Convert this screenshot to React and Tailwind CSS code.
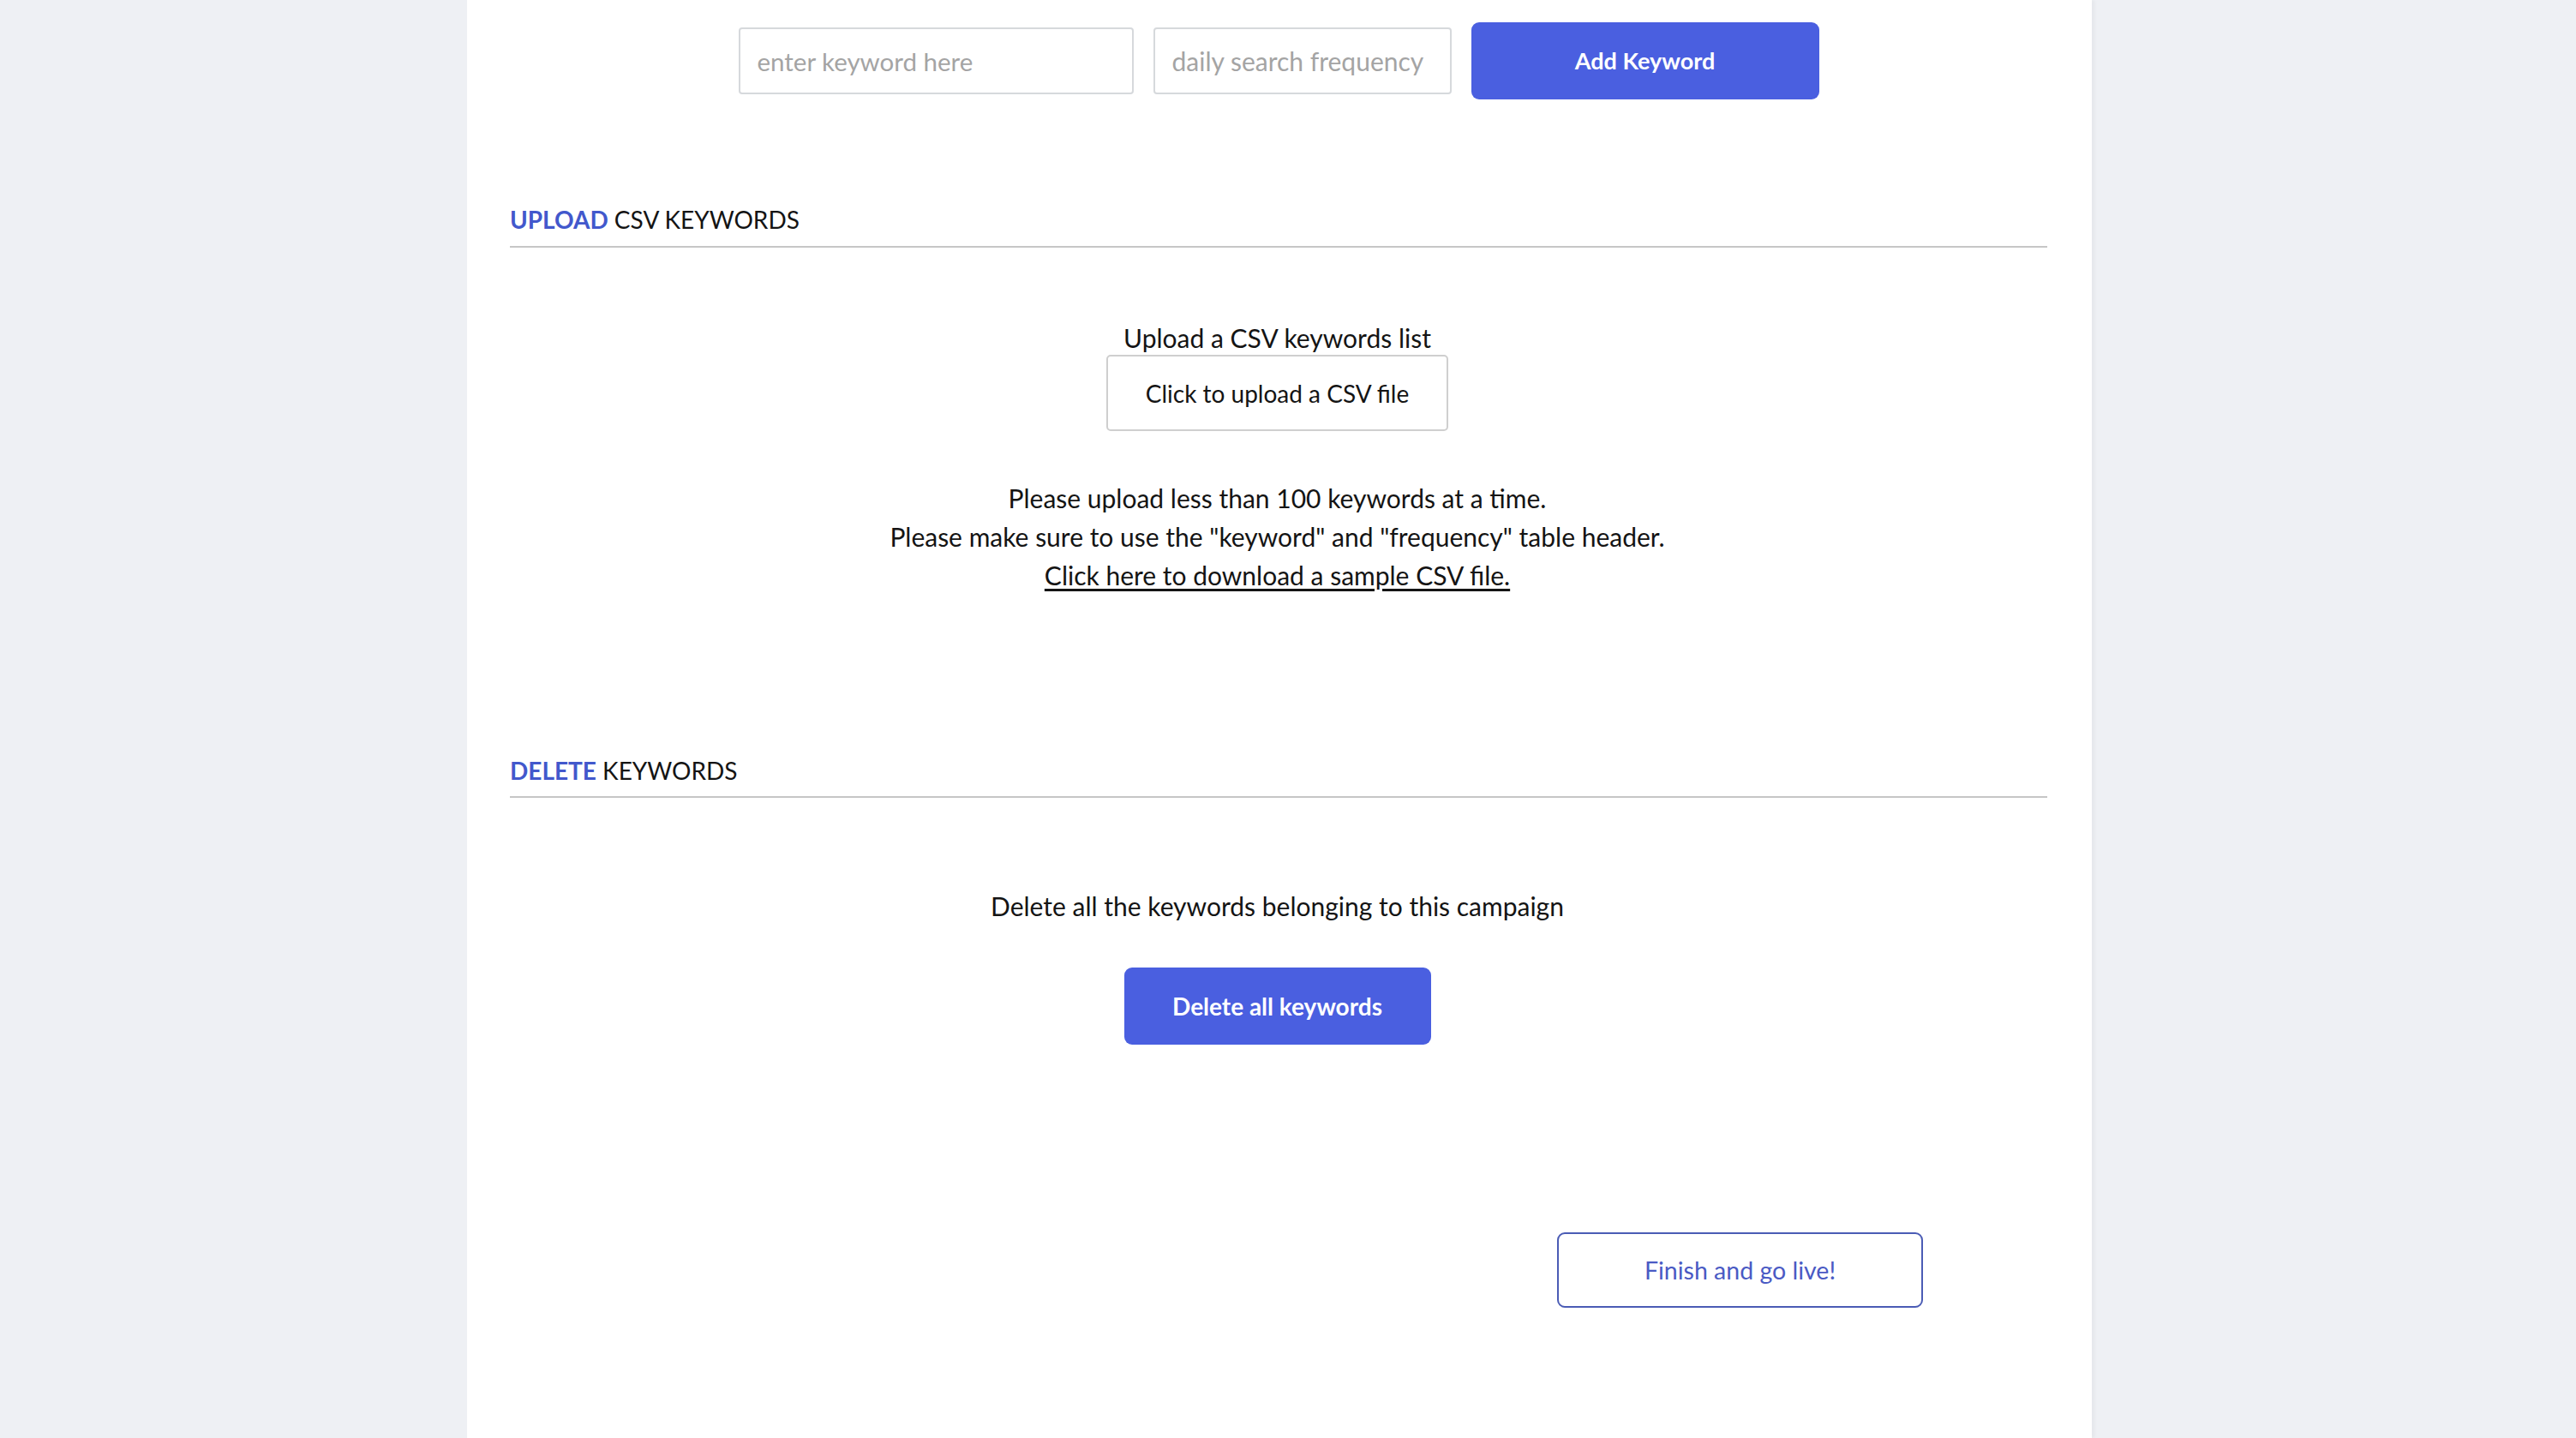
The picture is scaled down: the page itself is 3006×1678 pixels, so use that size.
export default function App() {
  return (
    <div className="min-h-screen bg-[#eef0f4] font-['Lato',sans-serif] text-[#141414]">
      <div className="ml-[545px] min-h-[1678px] w-[1896px] bg-white pl-[50px] pr-[52px] pt-[26px] shadow-[4px_0_3px_rgba(0,0,0,0.03)]">
        {/* add keyword row */}
        <div className="flex items-center justify-center gap-[23px]">
          <input
            className="h-[78px] w-[461px] rounded-[4px] border-2 border-[#d6d9dc] px-[20px] text-[29.5px] outline-none placeholder:text-[#a4a4a4]"
            placeholder="enter keyword here"
          />
          <input
            className="h-[78px] w-[348px] rounded-[4px] border-2 border-[#d6d9dc] px-[20px] text-[30px] outline-none placeholder:text-[#a4a4a4]"
            placeholder="daily search frequency"
          />
          <button className="h-[90px] w-[406px] rounded-[9px] bg-[#4a5fe0] text-[27px] font-bold text-white">
            Add Keyword
          </button>
        </div>

        {/* upload */}
        <h2 className="mt-[123px] border-b-2 border-[#c6c6c6] pb-[14px] text-[28px] leading-[34px]">
          <span className="font-bold text-[#4258cc]">UPLOAD</span> CSV KEYWORDS
        </h2>
        <div className="mt-[88px] flex flex-col items-center pr-[3px]">
          <p className="text-[30px] leading-[34px]">Upload a CSV keywords list</p>
          <button className="mt-[3px] h-[89px] w-[399px] rounded-[5px] border-2 border-[#cfcfcf] text-[28px]">
            Click to upload a CSV file
          </button>
          <div className="mt-[56px] text-center text-[30px] leading-[45px]">
            <p>Please upload less than 100 keywords at a time.</p>
            <p>Please make sure to use the "keyword" and "frequency" table header.</p>
            <a href="#" className="underline underline-offset-4">
              Click here to download a sample CSV file.
            </a>
          </div>
        </div>

        {/* delete */}
        <h2 className="mt-[188px] border-b-2 border-[#c6c6c6] pb-[13px] text-[28px] leading-[34px]">
          <span className="font-bold text-[#4258cc]">DELETE</span> KEYWORDS
        </h2>
        <div className="mt-[109px] flex flex-col items-center pr-[3px]">
          <p className="text-[30px] leading-[34px]">
            Delete all the keywords belonging to this campaign
          </p>
          <button className="mt-[55px] h-[90px] w-[358px] rounded-[9px] bg-[#4a5fe0] text-[28px] font-bold text-white">
            Delete all keywords
          </button>
        </div>

        <div className="mt-[219px] flex justify-end pr-[145px]">
          <button className="h-[88px] w-[427px] rounded-[9px] border-2 border-[#4b5cb5] text-[28.5px] text-[#4a5ac4]">
            Finish and go live!
          </button>
        </div>
      </div>
    </div>
  );
}
